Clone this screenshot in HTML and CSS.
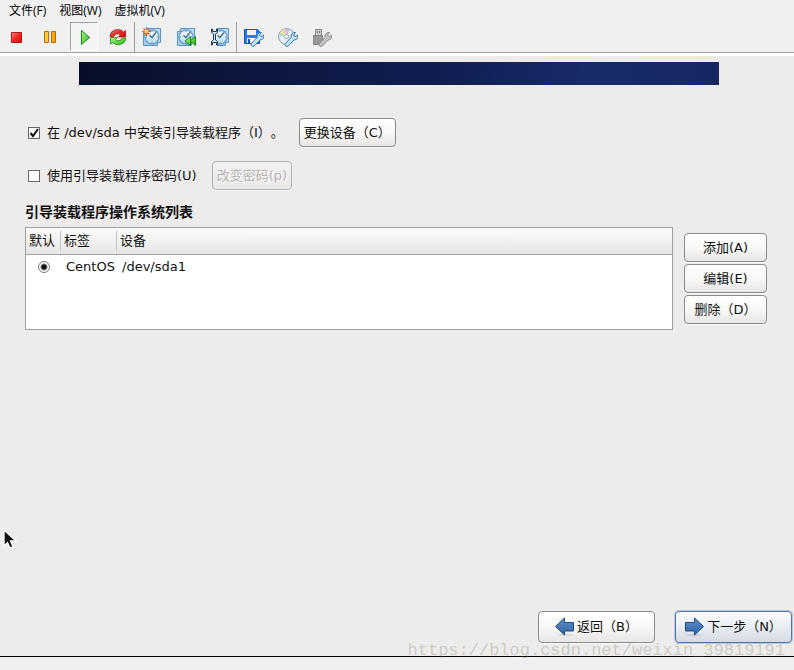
FILE: index.html
```html
<!DOCTYPE html>
<html lang="zh-CN">
<head>
<meta charset="utf-8">
<meta name="viewport" content="width=device-width, initial-scale=1">
<title>引导装载程序</title>
<link rel="stylesheet" href="styles.css">
</head>
<body>
<svg class="defs" aria-hidden="true">
  <defs>
    <linearGradient id="red" x2="1" y2="1"><stop offset="0" stop-color="#ff8a80"/><stop offset=".5" stop-color="#f02525"/><stop offset="1" stop-color="#d80c0c"/></linearGradient>
    <linearGradient id="amber" x2="1" y2="0"><stop offset="0" stop-color="#ffd84a"/><stop offset="1" stop-color="#f59a00"/></linearGradient>
    <linearGradient id="green" x2="1" y2="1"><stop offset="0" stop-color="#b4f58c"/><stop offset="1" stop-color="#27b414"/></linearGradient>
    <linearGradient id="sky" x2="0" y2="1"><stop offset="0" stop-color="#f4fafe"/><stop offset="1" stop-color="#b5daf2"/></linearGradient>
    <linearGradient id="arrow" x2="0" y2="1"><stop offset="0" stop-color="#5b8fc9"/><stop offset="1" stop-color="#3465a4"/></linearGradient>
    <g id="clock">
      <path d="M4.500 1.500h14v14h-14z" fill="#b9def5" stroke="#5b95c5"/>
      <path d="M1.500 4.500h14v14h-14z" fill="#a0cff0" stroke="#5b95c5"/>
      <circle cx="10" cy="10" r="7" fill="url(#sky)" stroke="#6d9dc2" stroke-width="1.300"/>
      <path d="M14 5.500l-4 5L7.500 8.500" fill="none" stroke="#3f6c92" stroke-width="1.300"/>
      <path d="M10 4v1M10 15v1M4 10h1M15 10h1" stroke="#5687ad"/>
    </g>
    <path id="wrench" d="M7.500 16.500L13 10.500Q12.500 6.500 15.500 5.500L17.500 5.500L15.500 8L17 9.700L19.700 8Q20.500 12.500 16 13L10.500 18.800Q8.800 20 7.500 18.800Q6.500 17.700 7.500 16.500z"/>
  </defs>
</svg>
<header class="chrome">
  <nav class="menu">
    <a href="#file">文件(F)</a>
    <a href="#view">视图(W)</a>
    <a href="#vm">虚拟机(V)</a>
  </nav>
  <div class="toolbar" role="toolbar">
    <div class="tools">
      <button class="tool" aria-label="停止"><svg viewBox="0 0 20 20"><path d="M5.500 5.500h10v10h-10z" fill="url(#red)" stroke="#b51616"/></svg></button>
      <button class="tool" aria-label="暂停"><svg viewBox="0 0 20 20"><path d="M4.500 4.500h4v11h-4zM11.500 4.500h4v11h-4z" fill="url(#amber)" stroke="#ba6a05"/></svg></button>
      <button class="tool pressed" aria-label="运行" aria-pressed="true"><svg viewBox="0 0 20 20"><path d="M7.500 3.500v14l8-7z" fill="url(#green)" stroke="#168a10"/></svg></button>
      <button class="tool" aria-label="重启"><svg viewBox="0 0 20 20"><path d="M2 9.500Q2.500 3 9.500 2.500q4-.2 6 2.500l2-1.500v6.500h-7l2-2.200Q8.500 5 5.500 9.500z" fill="url(#red)" stroke="#a51616" stroke-width=".8"/><path d="M18 11q-.5 6-7.500 6.800-3.800 0-5.800-2.300L2.500 17v-6.500h7l-2 2.200q3.500 3 7-1.700z" fill="url(#green)" stroke="#168a10" stroke-width=".8"/></svg></button>
    </div>
    <div class="tools">
      <button class="tool" aria-label="创建快照"><svg viewBox="0 0 20 20"><use href="#clock"/><path d="M4.500 0v9M0 4.500h9M1.500 1.500l6 6M7.500 1.500l-6 6" stroke="#ee5a18" stroke-width="1.200"/><circle cx="4.500" cy="4.500" r="1.700" fill="#ffe34b"/></svg></button>
      <button class="tool" aria-label="恢复快照"><svg viewBox="0 0 20 20"><use href="#clock"/><path d="M14.500 9.500v9L9 14zM19.500 9.500v9L14 14z" fill="url(#green)" stroke="#168a10"/></svg></button>
      <button class="tool" aria-label="管理快照"><svg viewBox="0 0 20 20"><use href="#clock"/><path d="M0 0h7v20H0z" fill="#f0f0f0"/><path d="M1.500 2v3.500l2 1.500v6l-2 1.500V18h1v-2.500h4V18h1v-3.500l-2-1.500V7l2-1.500V2h-1v2.500h-4V2z" fill="#c9e1f2" stroke="#243d59"/></svg></button>
    </div>
    <div class="tools">
      <button class="tool" aria-label="软盘设置"><svg viewBox="0 0 20 20"><path d="M.500 2.500h13l2 2v12H.500z" fill="#247bea" stroke="#1455b8"/><path d="M3 3h9v5H3z" fill="#e9f5ff"/><path d="M3 11h9v5H3z" fill="#fff"/><path d="M4 12h2v4H4z" fill="#1455b8"/><use href="#wrench" fill="#c5e3f5" stroke="#3977a6"/></svg></button>
      <button class="tool" aria-label="光盘设置"><svg viewBox="0 0 20 20"><circle cx="8.500" cy="9.500" r="8" fill="#e2edf4" stroke="#7f9caf"/><path d="M8.500 9.500L2 5q2-3 5-3.500z" fill="#f5dc9a"/><path d="M8.500 9.500L7 2q3-1 5 0z" fill="#cdbbee"/><path d="M8.500 9.500l-7-1 .5-3z" fill="#a9dfb7"/><circle cx="8.500" cy="9.500" r="2" fill="#fff" stroke="#8da5b5"/><use href="#wrench" fill="#c5e3f5" stroke="#3977a6"/></svg></button>
      <button class="tool" aria-label="USB 设置" disabled><svg viewBox="0 0 20 20"><path d="M3.500 2.500h6v6h-6z" fill="#ccc" stroke="#888"/><path d="M5 4h1v2H5zM7 4h1v2H7z" fill="#777"/><path d="M1.500 8.500h9v9h-9z" fill="#999" stroke="#888"/><use href="#wrench" fill="#c4c4c4" stroke="#8b8b8b"/></svg></button>
    </div>
  </div>
</header>
<main class="screen">
  <div class="banner"></div>
  <form class="loader">
    <div class="option">
      <label><input type="checkbox" checked>在 /dev/sda 中安装引导装载程序（I）。</label>
      <button type="button" class="btn">更换设备（C）</button>
    </div>
    <div class="option">
      <label><input type="checkbox">使用引导装载程序密码(U)</label>
      <button type="button" class="btn" disabled>改变密码(p)</button>
    </div>
    <h1>引导装载程序操作系统列表</h1>
    <div class="systems">
      <div class="list">
        <table>
          <thead><tr><th>默认</th><th>标签</th><th>设备</th></tr></thead>
          <tbody><tr><td><input type="radio" name="default" aria-label="CentOS" checked></td><td>CentOS</td><td>/dev/sda1</td></tr></tbody>
        </table>
      </div>
      <div class="actions">
        <button type="button" class="btn">添加(A)</button>
        <button type="button" class="btn">编辑(E)</button>
        <button type="button" class="btn">删除（D）</button>
      </div>
    </div>
  </form>
  <svg class="pointer" viewBox="0 0 14 20" aria-hidden="true"><path d="M1 1v16l3.500-3.500L7 19l3-1.500L7.500 12H13z" fill="#111" stroke="#fff" stroke-width="1.300"/></svg>
  <footer class="steps">
    <button class="btn step"><svg viewBox="0 0 20 20"><ellipse cx="11" cy="18" rx="8" ry="1.500" fill="#ddd"/><path d="M.500 9.500l9-8.500v4.500h9v8.500h-9V18z" fill="url(#arrow)" stroke="#204a87"/></svg>返回（B）</button>
    <button class="btn step focus"><svg viewBox="0 0 20 20"><ellipse cx="9" cy="18" rx="8" ry="1.500" fill="#ccd0d5"/><path d="M18.500 9.500L9.500 1v4.500h-9v8.500h9V18z" fill="url(#arrow)" stroke="#204a87"/></svg>下一步（N）</button>
  </footer>
</main>
<div class="status"><span class="watermark">https://blog.csdn.net/weixin_39819191</span></div>
</body>
</html>
```
FILE: styles.css
```css
* { box-sizing: border-box; }

body {
  margin: 0;
  min-height: 100vh;
  display: flex;
  flex-direction: column;
  background: #f0f0f0;
  color: #111;
  font: 13px/16px "DejaVu Sans", "Noto Sans CJK SC", sans-serif;
  text-spacing-trim: space-all;
}

button { font: inherit; color: inherit; }
.defs { position: absolute; width: 0; height: 0; }

.chrome { border-bottom: 1px solid #a0a0a0; }

.menu {
  display: flex;
  gap: 13px;
  height: 22px;
  padding: 0 9px;
  font: 12px/22px "Open Sans", "Noto Sans CJK SC", sans-serif;
}
.menu a { color: #000; text-decoration: none; }

.toolbar { display: flex; height: 30px; }
.tools { display: flex; gap: 6px; padding: 0 2px; }
.tools + .tools { padding-left: 3px; border-left: 1px solid #a0a0a0; }
.tool {
  width: 28px;
  height: 29px;
  padding: 4px 3px;
  border: 1px solid transparent;
  background: none;
}
.tool svg { display: block; width: 20px; height: 20px; }
.tool.pressed {
  border-color: #a0a0a0 #fff #fff #a0a0a0;
  background: #f4f4f4;
}

.screen {
  flex: 1;
  display: flex;
  flex-direction: column;
  position: relative;
  border-top: 3px solid #fff;
  border-bottom: 1px solid #000;
  background: #edeceb;
}
.banner {
  height: 23px;
  margin: 6px 75px 0 79px;
  background: linear-gradient(100deg, #080e27, #0c163b 20%, #101d50 55%, #182b6b 80%, #162863);
}

.loader { padding: 33px 27px 0 25px; }
.option {
  display: flex;
  align-items: center;
  gap: 15px;
  margin-bottom: 14px;
}
.option label { display: flex; align-items: center; }

.option input {
  appearance: none;
  width: 12px;
  height: 12px;
  margin: 0 7px 0 3px;
  border: 1px solid #666;
  background: #fff;
}
.option input:checked {
  background: #fff url("data:image/svg+xml,%3Csvg xmlns='http://www.w3.org/2000/svg' viewBox='0 0 10 10'%3E%3Cpath d='M1.500 5l2.500 3L9 1' fill='none' stroke='%23111' stroke-width='2'/%3E%3C/svg%3E");
}

.btn {
  height: 29px;
  padding: 0 4px;
  border: 1px solid #8b8b89;
  border-radius: 4px;
  background: linear-gradient(#fff, #f8f8f7 50%, #e7e6e4);
  box-shadow: 0 1px 0 #f8f8f8;
  white-space: nowrap;
}
.btn:disabled {
  border-color: #b0b0ae;
  background: linear-gradient(#f3f2f1, #e9e8e6);
  color: #b3b2b0;
  text-shadow: 1px 1px #fff;
}

h1 {
  margin: 0 0 7px;
  font-size: 14px;
  line-height: 16px;
  font-weight: bold;
}

.systems { display: flex; gap: 11px; }
.list {
  flex: 1;
  min-height: 103px;
  border: 1px solid #a0a09e;
  background: #fff;
}
table {
  width: 100%;
  table-layout: fixed;
  border-collapse: separate;
  border-spacing: 0;
}
th {
  height: 27px;
  padding: 0 3px;
  border-bottom: 1px solid #a0a09e;
  background:
    linear-gradient(#c4c3c1, #c4c3c1) right center / 1px 20px no-repeat,
    linear-gradient(#fbfbfa, #e7e6e4);
  font-weight: normal;
  text-align: left;
}
th:last-child { background: linear-gradient(#fbfbfa, #e7e6e4); }
th:nth-child(1) { width: 35px; }
th:nth-child(2) { width: 56px; }
td { height: 24px; padding: 0 5px; white-space: nowrap; }
td:first-child { text-align: center; }
td input {
  appearance: none;
  display: block;
  width: 12px;
  height: 12px;
  margin: 0 auto;
  border: 1px solid #777;
  border-radius: 50%;
  background: radial-gradient(circle, #111 2px, #fff 4px);
}

.actions {
  display: flex;
  flex-direction: column;
  gap: 2px;
  width: 83px;
  padding-top: 6px;
}

.pointer {
  position: absolute;
  left: 3px;
  bottom: 107px;
  width: 14px;
  height: 20px;
}

.steps {
  display: flex;
  justify-content: flex-end;
  gap: 20px;
  margin-top: auto;
  padding: 0 2px 13px;
}
.step {
  display: flex;
  align-items: center;
  justify-content: center;
  gap: 2px;
  width: 117px;
  height: 32px;
}
.step svg { width: 20px; height: 20px; }
.focus {
  border-color: #4f76a8;
  background: linear-gradient(#fafbfd, #e9edf2 50%, #d4dae2);
  box-shadow: 0 0 0 1px #b5c8e0;
}

.status { position: relative; height: 13px; }
.watermark {
  position: absolute;
  right: 9px;
  bottom: 9px;
  color: rgba(120, 120, 100, .3);
  font: 17px/20px "Liberation Mono", monospace;
  pointer-events: none;
}
```
